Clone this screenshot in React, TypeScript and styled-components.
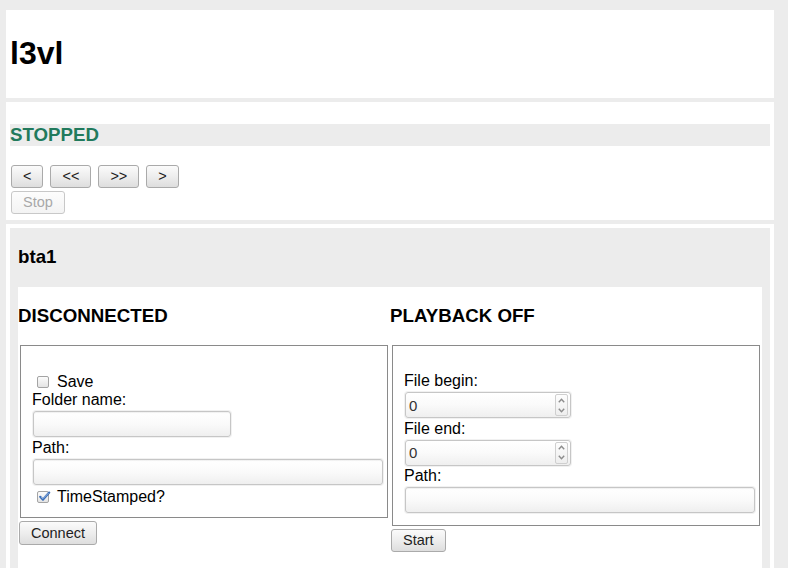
import React from "react";
import styled, { createGlobalStyle, css } from "styled-components";

const GlobalStyle = createGlobalStyle`
  html, body {
    margin: 0;
    padding: 0;
    background: #ececec;
    font-family: "Liberation Sans", Arial, sans-serif;
    color: #000;
  }
  * { box-sizing: border-box; }
`;

const Page = styled.div`
  display: flex;
  flex-direction: column;
  gap: 4px;
  padding: 10px 14px 0 6px;
`;

const Panel = styled.section<{ $padBottom?: number }>`
  background: #fff;
  display: flow-root;
  padding: 4px 4px ${(p) => p.$padBottom ?? 4}px 4px;
`;

const Title = styled.h1`
  margin: 21.44px 0;
  font-size: 32px;
  font-weight: bold;
  line-height: 36.8px;
`;

const Heading = styled.h3<{ $bar?: boolean; $color?: string }>`
  margin: 18.72px 0;
  font-size: 18.72px;
  line-height: 21.5px;
  font-weight: bold;
  color: ${(p) => p.$color ?? "#000"};
  ${(p) =>
    p.$bar &&
    css`
      background: #ececec;
    `}
`;

const ButtonRow = styled.div<{ $mt?: number }>`
  display: flex;
  gap: 7px;
  padding-left: 1px;
  margin-top: ${(p) => p.$mt ?? 0}px;
`;

const Button = styled.button<{ $h?: number; $ml?: number; $mt?: number }>`
  height: ${(p) => p.$h ?? 23}px;
  padding: 0 11px;
  margin: ${(p) => p.$mt ?? 0}px 0 0 ${(p) => p.$ml ?? 0}px;
  font-family: "Liberation Sans", Arial, sans-serif;
  font-size: 14.5px;
  color: #222;
  border: 1px solid #aaaaaa;
  border-radius: 3px;
  background: linear-gradient(to bottom, #fbfbfb 0%, #ececec 55%, #dedede 100%);
  cursor: pointer;
  &:disabled {
    color: #a8a8a8;
    border-color: #c8c8c8;
    background: linear-gradient(to bottom, #fdfdfd 0%, #f3f3f3 100%);
    cursor: default;
  }
`;

const Device = styled.div`
  background: #ececec;
  display: flow-root;
  padding: 0 8px;
`;

const Content = styled.div`
  background: #fff;
  display: grid;
  grid-template-columns: minmax(0, 1fr) minmax(0, 1fr);
  align-items: start;
  padding-bottom: 40px;
`;

const Column = styled.div`
  display: flex;
  flex-direction: column;
  align-items: flex-start;
  min-width: 0;
`;

const Fieldset = styled.fieldset`
  align-self: stretch;
  margin: 0 2px;
  min-width: 0;
  border: 1px solid #8a8a8a;
  padding: 26px 11px 10px;
  font-size: 16px;
  line-height: 18.4px;
  display: flex;
  flex-direction: column;
  align-items: flex-start;
`;

const CheckRow = styled.label<{ $h: number }>`
  display: flex;
  align-items: center;
  gap: 8px;
  height: ${(p) => p.$h}px;
  padding-left: 5px;
`;

const Box = styled.span<{ $checked?: boolean }>`
  width: 12px;
  height: 12px;
  border: 1px solid #a4a4a4;
  border-radius: 2px;
  background: linear-gradient(to bottom, #fcfcfc, #e4e4e4);
  position: relative;
  flex: none;
  svg {
    position: absolute;
    left: 0px;
    top: -2px;
  }
`;

const Label = styled.span`
  display: block;
  line-height: 18.4px;
`;

const TextInput = styled.input<{ $w: number }>`
  width: ${(p) => p.$w}px;
  height: 26px;
  margin: 1.5px 0 1.5px 1px;
  flex: none;
  border: 1px solid #c6c6c6;
  border-radius: 3px;
  box-shadow: 0 0 0 1px #f1f1f1, inset 0 1px 1px rgba(0, 0, 0, 0.06);
  background: linear-gradient(to bottom, #ffffff 0%, #fafafa 50%, #efefef 100%);
  font-family: "Liberation Sans", Arial, sans-serif;
  font-size: 15px;
  padding: 0 3px;
  outline: none;
`;

const NumberBox = styled.div`
  width: 166px;
  height: 26px;
  margin: 1.5px 0 1.5px 1px;
  border: 1px solid #c6c6c6;
  border-radius: 3px;
  box-shadow: 0 0 0 1px #f1f1f1;
  background: linear-gradient(to bottom, #ffffff 0%, #fafafa 50%, #efefef 100%);
  display: flex;
  align-items: center;
  padding: 0 2px 0 3px;
`;

const NumberValue = styled.input`
  flex: 1;
  min-width: 0;
  border: none;
  background: transparent;
  outline: none;
  padding: 0;
  font-family: "Liberation Sans", Arial, sans-serif;
  font-size: 15px;
  color: #333;
`;

const Spinner = styled.div`
  width: 13px;
  height: 22px;
  border: 1px solid #cfcfcf;
  border-radius: 2px;
  background: linear-gradient(to bottom, #fdfdfd, #eeeeee);
  display: flex;
  flex-direction: column;
  align-items: center;
  justify-content: space-around;
`;

const Check = () => (
  <svg width="13" height="13" viewBox="0 0 13 13">
    <path
      d="M2.2 6.8 L5 9.6 L11.2 2.6"
      fill="none"
      stroke="#3d6fb8"
      strokeWidth="2.2"
      strokeLinecap="round"
      strokeLinejoin="round"
    />
    <path d="M3 6.9 L5 8.6 L10.6 3" fill="none" stroke="#a9c6ee" strokeWidth="0.8" />
  </svg>
);

const Chevron = ({ up }: { up?: boolean }) => (
  <svg width="7" height="5" viewBox="0 0 7 5">
    <path
      d={up ? "M0.8 4.2 L3.5 1.2 L6.2 4.2" : "M0.8 0.8 L3.5 3.8 L6.2 0.8"}
      fill="none"
      stroke="#8c8c8c"
      strokeWidth="1.4"
    />
  </svg>
);

const NumberField = ({ value }: { value: string }) => (
  <NumberBox>
    <NumberValue value={value} readOnly />
    <Spinner>
      <Chevron up />
      <Chevron />
    </Spinner>
  </NumberBox>
);

export default function App() {
  return (
    <>
      <GlobalStyle />
      <Page>
        <Panel>
          <Title>l3vl</Title>
        </Panel>
        <Panel $padBottom={6}>
          <Heading $bar $color="#217a5c">STOPPED</Heading>
          <ButtonRow>
            <Button>&lt;</Button>
            <Button>&lt;&lt;</Button>
            <Button>&gt;&gt;</Button>
            <Button>&gt;</Button>
          </ButtonRow>
          <ButtonRow $mt={3}>
            <Button disabled>Stop</Button>
          </ButtonRow>
        </Panel>
        <Panel>
          <Device>
            <Heading>bta1</Heading>
            <Content>
              <Column>
                <Heading>DISCONNECTED</Heading>
                <Fieldset>
                  <CheckRow $h={19}>
                    <Box />
                    Save
                  </CheckRow>
                  <Label>Folder name:</Label>
                  <TextInput $w={198} />
                  <Label>Path:</Label>
                  <TextInput $w={350} />
                  <CheckRow $h={21}>
                    <Box $checked>
                      <Check />
                    </Box>
                    TimeStamped?
                  </CheckRow>
                </Fieldset>
                <Button $h={24} $ml={1} $mt={3}>
                  Connect
                </Button>
              </Column>
              <Column>
                <Heading>PLAYBACK OFF</Heading>
                <Fieldset>
                  <Label>File begin:</Label>
                  <NumberField value="0" />
                  <Label>File end:</Label>
                  <NumberField value="0" />
                  <Label>Path:</Label>
                  <TextInput $w={350} />
                </Fieldset>
                <Button $h={23} $ml={1} $mt={3}>
                  Start
                </Button>
              </Column>
            </Content>
          </Device>
        </Panel>
      </Page>
    </>
  );
}
